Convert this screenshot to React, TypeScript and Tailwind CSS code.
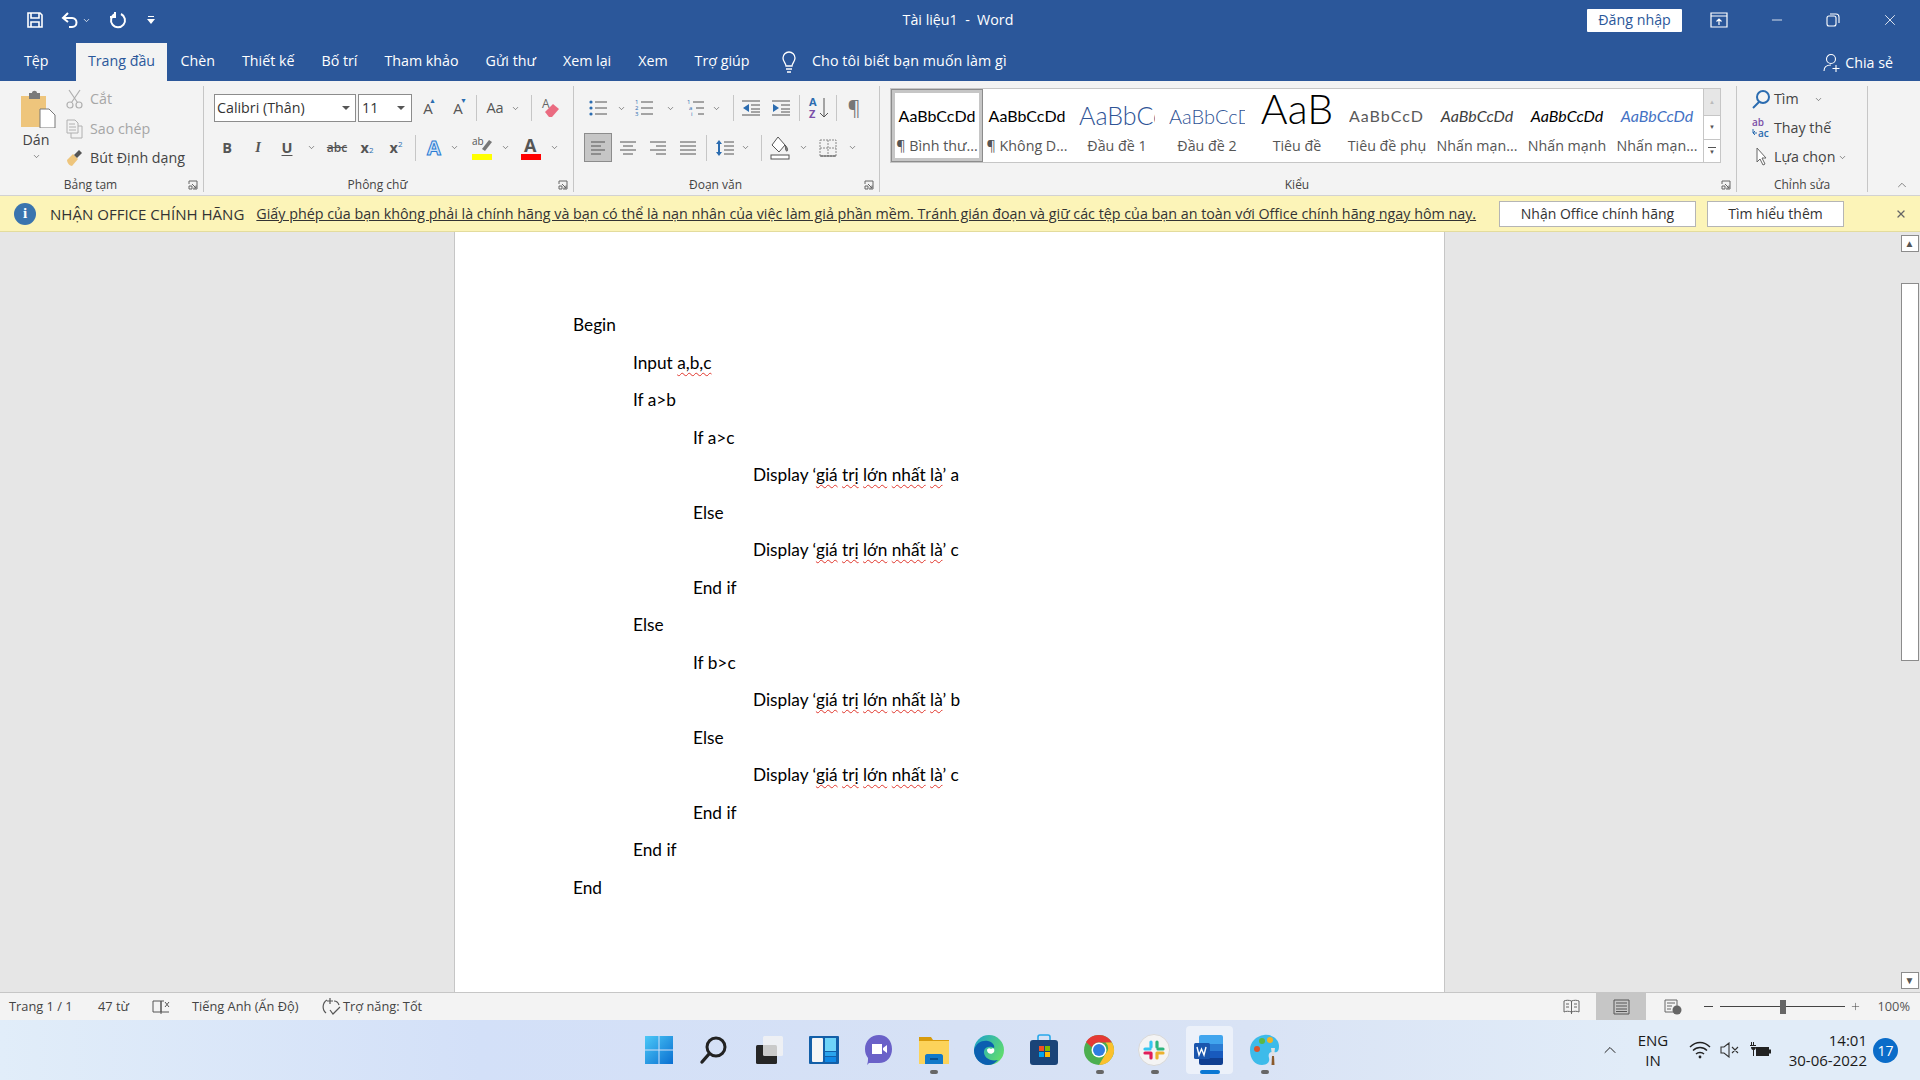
import type { ReactNode } from "react";
import { ChevronDown, ChevronUp, Minus, Plus, X } from "lucide-react";

const tabs = ["Chèn", "Thiết kế", "Bố trí", "Tham khảo", "Gửi thư", "Xem lại", "Xem", "Trợ giúp"];

const indents = ["pl-0", "pl-[60px]", "pl-[120px]", "pl-[180px]"];

const Bad = ({ children }: { children: ReactNode }) => (
  <span className="underline decoration-wavy decoration-[#e0362c] decoration-1 underline-offset-[3px]">{children}</span>
);

const Display = ({ end }: { end: string }) => (
  <>
    Display ‘<Bad>giá</Bad> <Bad>trị</Bad> <Bad>lớn</Bad> <Bad>nhất</Bad> <Bad>là</Bad>’ {end}
  </>
);

const lines: { level: number; text: ReactNode }[] = [
  { level: 0, text: "Begin" },
  { level: 1, text: <>Input <Bad>a,b,c</Bad></> },
  { level: 1, text: "If a>b" },
  { level: 2, text: "If a>c" },
  { level: 3, text: <Display end="a" /> },
  { level: 2, text: "Else" },
  { level: 3, text: <Display end="c" /> },
  { level: 2, text: "End if" },
  { level: 1, text: "Else" },
  { level: 2, text: "If b>c" },
  { level: 3, text: <Display end="b" /> },
  { level: 2, text: "Else" },
  { level: 3, text: <Display end="c" /> },
  { level: 2, text: "End if" },
  { level: 1, text: "End if" },
  { level: 0, text: "End" },
];

function Ico({ w = 20, h = 20, children }: { w?: number; h?: number; children: ReactNode }) {
  return (
    <svg width={w} height={h} viewBox={`0 0 ${w} ${h}`} fill="none" stroke="#555" strokeWidth="1" className="shrink-0 overflow-visible">
      {children}
    </svg>
  );
}

const Chev = ({ className = "" }: { className?: string }) => (
  <div className={`w-[10px] flex justify-center shrink-0 ${className}`}>
    <ChevronDown size={9} strokeWidth={1.6} color="#444" />
  </div>
);

const Cell = ({ className = "", children }: { className?: string; children: ReactNode }) => (
  <div className={`w-[20px] h-full flex items-center justify-center shrink-0 ${className}`}>{children}</div>
);

const Div = ({ className = "" }: { className?: string }) => (
  <div className={`w-px h-[26px] bg-[#c6c6c6] shrink-0 ${className}`} />
);

const Launcher = () => (
  <svg width="10" height="10" viewBox="0 0 10 10" fill="none" stroke="#666" strokeWidth="1" className="absolute right-[5px] bottom-[2px]">
    <path d="M1 4V1h8v8H5M4 4l4 4M5.500 8H8V5.500" />
    <path d="M1 6h3v3H1z" />
  </svg>
);

function Group({ label, launcher, className, children }: { label: string; launcher?: boolean; className: string; children: ReactNode }) {
  return (
    <div className={`relative h-[106px] flex flex-col border-r border-[#c6c6c6] shrink-0 ${className}`}>
      <div className="flex-1 min-h-0">{children}</div>
      <div className={`h-[14px] leading-[14px] text-center text-[12px] text-[#444] ${launcher ? "pr-[22px]" : ""}`}>{label}</div>
      {launcher && <Launcher />}
    </div>
  );
}

const ListIcon = ({ kind }: { kind: "b" | "n" | "m" }) => (
  <Ico>
    {kind === "b" && (
      <g fill="#2b6cb0" stroke="none">
        <circle cx="3" cy="4" r="1.600" />
        <circle cx="3" cy="10" r="1.600" />
        <circle cx="3" cy="16" r="1.600" />
      </g>
    )}
    {kind !== "b" && (
      <g fill="#2b6cb0" stroke="none" fontSize="6" fontFamily="Open Sans">
        <text x="1" y="6">1</text>
        <text x={kind === "m" ? 3 : 1} y="12">{kind === "m" ? "a" : "2"}</text>
        <text x={kind === "m" ? 5 : 1} y="18">{kind === "m" ? "i" : "3"}</text>
      </g>
    )}
    <path d={kind === "m" ? "M7 4h11M10 10h8M12 16h6" : "M7 4h12M7 10h12M7 16h12"} />
  </Ico>
);

const AlignIcon = ({ d }: { d: string }) => (
  <Ico>
    <path d={d} stroke="#555" />
  </Ico>
);

function StyleItem({ preview, label, selected, className = "" }: { preview: ReactNode; label: string; selected?: boolean; className?: string }) {
  return (
    <div className={`w-[90px] h-[71px] shrink-0 overflow-hidden flex flex-col ${selected ? "border-[3px] border-[#c6c6c6] outline outline-1 outline-[#8c8c8c]" : ""}`}>
      <div className={`${selected ? "h-[43px] pt-[2px]" : "h-[46px] pt-[5px]"} flex items-center justify-center overflow-hidden whitespace-nowrap font-['Lato',sans-serif] ${className}`}>
        {preview}
      </div>
      <div className="h-[20px] leading-[20px] text-center text-[#555] text-[14.250px] whitespace-nowrap">{label}</div>
    </div>
  );
}

function Logo({ children }: { children: ReactNode }) {
  return (
    <svg width="32" height="32" viewBox="0 0 32 32">
      {children}
    </svg>
  );
}

const dockIcons: { icon: ReactNode; run?: boolean; active?: boolean }[] = [
  {
    icon: (
      <Logo>
        <defs>
          <linearGradient id="win" x1="0" y1="0" x2="1" y2="1">
            <stop offset="0" stopColor="#4cc8f7" />
            <stop offset="1" stopColor="#0a6fd1" />
          </linearGradient>
        </defs>
        <path d="M2 2h13.500v13.500H2zM16.500 2H30v13.500H16.500zM2 16.500h13.500V30H2zM16.500 16.500H30V30H16.500z" fill="url(#win)" />
      </Logo>
    ),
  },
  {
    icon: (
      <Logo>
        <circle cx="18" cy="13" r="9" fill="none" stroke="#222" strokeWidth="3" />
        <path d="M11 20l-7 8" stroke="#222" strokeWidth="3.400" strokeLinecap="round" />
      </Logo>
    ),
  },
  {
    icon: (
      <Logo>
        <rect x="3" y="11" width="21" height="19" rx="1.500" fill="#262626" />
        <rect x="10" y="2" width="20" height="20" rx="1.500" fill="#f4f4f4" fillOpacity="0.8" />
      </Logo>
    ),
  },
  {
    icon: (
      <Logo>
        <rect x="1" y="2" width="30" height="28" rx="1" fill="#135fa8" />
        <rect x="4" y="4" width="11" height="24" rx="1" fill="#f5f5f5" />
        <rect x="17" y="4" width="11" height="13" fill="#6fd4f8" />
        <rect x="17" y="18" width="11" height="4" fill="#2ba4ec" />
        <rect x="17" y="23" width="11" height="5" fill="#1088e4" />
      </Logo>
    ),
  },
  {
    icon: (
      <Logo>
        <path d="M16 1c8 0 13 6 13 14s-5 14-13 14H6l-2 2c1-3 1-5 1-7-2-3-3-5-3-9C2 7 8 1 16 1z" fill="#6a61c8" />
        <path d="M9 10h10v10H9zM20 14l4-3v8l-4-3z" fill="#fff" />
      </Logo>
    ),
  },
  {
    run: true,
    icon: (
      <Logo>
        <path d="M1 3h12l2 3h16v3H1z" fill="#d89b0c" />
        <path d="M1 7h30v23H1z" fill="#fcd35a" />
        <path d="M7 22c0-1 1-2 2-2h14c1 0 2 1 2 2v8H7z" fill="#1279c9" />
        <path d="M12 25h8" stroke="#063f78" strokeWidth="1.400" />
      </Logo>
    ),
  },
  {
    icon: (
      <Logo>
        <defs>
          <linearGradient id="edgeA" x1="0" y1="0" x2="1" y2="0.6">
            <stop offset="0" stopColor="#1aa0cf" />
            <stop offset="1" stopColor="#5fdc6e" />
          </linearGradient>
        </defs>
        <circle cx="16" cy="16" r="15" fill="url(#edgeA)" />
        <path d="M1 16C3 9 9 6 15 7c5 1 7 5 6 7-3-2-9-2-10 3-1 6 6 11 14 9-3 3-6 5-10 5C7 31 1 24 1 16z" fill="#0b5fb0" />
        <path d="M18 15c3-2 4 1 3 3-2 3-7 2-7-2 0-1 2-3 4-1z" fill="#fff" />
      </Logo>
    ),
  },
  {
    icon: (
      <Logo>
        <path d="M10 7V3c0-1 1-2 2-2h8c1 0 2 1 2 2v4" fill="none" stroke="#28a8ea" strokeWidth="1.600" />
        <rect x="2" y="6" width="28" height="25" rx="3" fill="#1a4478" />
        <rect x="11" y="12" width="5" height="5" fill="#f25022" />
        <rect x="17" y="12" width="5" height="5" fill="#7fba00" />
        <rect x="11" y="18" width="5" height="5" fill="#00a4ef" />
        <rect x="17" y="18" width="5" height="5" fill="#ffb900" />
      </Logo>
    ),
  },
  {
    run: true,
    icon: (
      <Logo>
        <circle cx="16" cy="16" r="15" fill="#4caf50" />
        <path d="M16 1a15 15 0 0 1 13 7.500H16a7.500 7.500 0 0 0-7 5L3 8A15 15 0 0 1 16 1z" fill="#e53935" />
        <path d="M29 8.500A15 15 0 0 1 16 31l6.500-11a7.500 7.500 0 0 0 0-11.500z" fill="#fbc02d" />
        <circle cx="16" cy="16" r="7.500" fill="#fff" />
        <circle cx="16" cy="16" r="6" fill="#2f7de1" />
      </Logo>
    ),
  },
  {
    run: true,
    icon: (
      <Logo>
        <circle cx="16" cy="16" r="15.500" fill="#f4f4f4" stroke="#d8d8d8" />
        <g strokeWidth="3.200" strokeLinecap="round">
          <path d="M13 8v5" stroke="#36c5f0" />
          <path d="M7 15h5" stroke="#36c5f0" />
          <path d="M19 8v5" stroke="#2eb67d" />
          <path d="M20 15h5" stroke="#2eb67d" />
          <path d="M19 24v-5" stroke="#ecb22e" />
          <path d="M25 19h-5" stroke="#ecb22e" />
          <path d="M13 24v-5" stroke="#e01e5a" />
          <path d="M7 19h5" stroke="#e01e5a" />
        </g>
      </Logo>
    ),
  },
  {
    active: true,
    icon: (
      <Logo>
        <path d="M8 1h20a2 2 0 0 1 2 2v7H6V3a2 2 0 0 1 2-2z" fill="#41a5ee" />
        <path d="M6 10h24v7H6z" fill="#2b7cd3" />
        <path d="M6 17h24v7H6z" fill="#185abd" />
        <path d="M6 24h24v5a2 2 0 0 1-2 2H8a2 2 0 0 1-2-2z" fill="#103f91" />
        <rect x="1" y="9" width="16" height="16" rx="1.500" fill="#1a55ad" />
        <path d="M4 13l2 8 2.500-6 2.500 6 2-8" fill="none" stroke="#fff" strokeWidth="1.400" />
      </Logo>
    ),
  },
  {
    run: true,
    icon: (
      <Logo>
        <path d="M15 1c8-1 15 4 15 11 0 8-4 6-7 6-3 0-4 3-3 6s-1 7-7 7C6 31 1 25 1 16 1 8 7 2 15 1z" fill="#3dbbea" />
        <circle cx="8" cy="15" r="3" fill="#d9552d" />
        <circle cx="13" cy="7" r="3" fill="#5bb846" />
        <circle cx="21" cy="6" r="3" fill="#f3b325" />
        <path d="M22 14h4l-1 8h-2z" fill="#e0e0e0" />
        <path d="M23 22h2l.5 9h-3z" fill="#8a5a2b" />
      </Logo>
    ),
  },
];

export default function App() {
  return (
    <div className="w-[1920px] h-[1080px] overflow-hidden flex flex-col font-['Open_Sans',sans-serif] text-[14px] bg-[#e6e6e6]">
      {/* Title bar */}
      <div className="h-[43px] bg-[#2b579a] flex items-center text-white shrink-0 pb-[3px]">
        <div className="w-[70px] flex justify-center">
          <svg width="18" height="18" viewBox="0 0 18 18" fill="none" stroke="#fff" strokeWidth="1.600">
            <path d="M2 2h12l2 2v12H2z" />
            <path d="M5 2v5h8V2M5 16v-5h8v5" />
          </svg>
        </div>
        <svg width="20" height="18" viewBox="0 0 20 18" fill="none" stroke="#fff" strokeWidth="2" className="-ml-[10px]">
          <path d="M8 2L3 7l5 4M3 7h9c6 0 6 9 0 9H9" />
        </svg>
        <ChevronDown size={9} color="#fff" className="ml-[2px]" />
        <svg width="18" height="18" viewBox="0 0 18 18" fill="none" stroke="#fff" strokeWidth="2" className="ml-[18px]">
          <path d="M6 3a7 7 0 1 0 6 0M6 1v5H1" />
        </svg>
        <svg width="8" height="8" viewBox="0 0 8 8" fill="#fff" className="ml-[20px]">
          <path d="M1 0h6v1H1zM0 3h8L4 8z" />
        </svg>
        <div className="ml-[743px] w-[120px] text-center whitespace-pre text-[14.250px]">Tài liệu1  -  Word</div>
        <div className="ml-[569px] w-[95px] h-[23px] bg-white text-[#2b579a] text-[14.250px] flex items-center justify-center rounded-[1px]">Đăng nhập</div>
        <svg width="18" height="16" viewBox="0 0 18 16" fill="none" stroke="#fff" strokeWidth="1.200" className="ml-[28px]">
          <path d="M1 1h16v14H1zM1 4h16M9 13V7M6.500 9.500L9 7l2.500 2.500" />
        </svg>
        <Minus size={16} color="#fff" strokeWidth={1.2} className="ml-[41px]" />
        <svg width="14" height="14" viewBox="0 0 14 14" fill="none" stroke="#fff" strokeWidth="1.100" className="ml-[41px]">
          <rect x="1" y="3" width="9" height="10" rx="2" />
          <path d="M4 1h6c2 0 3 1 3 3v6" />
        </svg>
        <X size={18} color="#fff" strokeWidth={1.1} className="ml-[41px]" />
      </div>

      {/* Tabs */}
      <div className="h-[38px] bg-[#2b579a] flex items-end text-white shrink-0 text-[14.250px]">
        <div className="h-full ml-[24px] w-[52px] flex items-center pb-[2px]">Tệp</div>
        <div className="h-full w-[91px] bg-[#f3f3f3] text-[#2b579a] flex items-center justify-center pb-[2px]">Trang đầu</div>
        {tabs.map((t) => (
          <div key={t} className="h-full px-[13.500px] flex items-center whitespace-nowrap pb-[2px]">{t}</div>
        ))}
        <svg width="18" height="22" viewBox="0 0 18 22" fill="none" stroke="#fff" strokeWidth="1.300" className="ml-[17px] mb-[8px]">
          <path d="M6 15c0-3-3-4-3-8a6 6 0 0 1 12 0c0 4-3 5-3 8zM6 18h6M7 21h4" />
        </svg>
        <div className="ml-[14px] h-full flex items-center whitespace-nowrap tracking-[0.100px] pb-[2px]">Cho tôi biết bạn muốn làm gì</div>
        <div className="ml-auto pr-[27px] h-full flex items-center gap-[4px] pt-[2px]">
          <svg width="18" height="20" viewBox="0 0 18 20" fill="none" stroke="#fff" strokeWidth="1.100">
            <circle cx="8" cy="6" r="4.500" />
            <path d="M1 18c0-4 3-6 7-6M13 12v7M9.500 15.500h7" />
          </svg>
          Chia sẻ
        </div>
      </div>

      {/* Ribbon */}
      <div className="h-[115px] bg-[#f3f3f3] border-b border-[#d2d2d2] flex pt-[5px] shrink-0 text-[#444] text-[14.250px]">
        <Group label="Bảng tạm" launcher className="w-[204px]">
          <div className="flex h-full">
            <div className="w-[66px] pl-[6px] flex flex-col items-center pt-[4px] shrink-0">
              <svg width="36" height="38" viewBox="0 0 36 38" className="ml-[4px]">
                <path d="M1 6h25v31H1z" fill="#eec57c" />
                <path d="M9 3h3c0-3 5-3 5 0h3v6H9z" fill="#7a7a7a" />
                <path d="M20 19h9l6 6v13H20z" fill="#fff" stroke="#777" />
              </svg>
              <div className="mt-[3px] leading-[18px]">Dán</div>
              <ChevronDown size={9} strokeWidth={1.6} color="#444" className="mt-[3px]" />
            </div>
            <div className="flex flex-col gap-[5.500px] pt-[1px]">
              <div className="h-[24px] flex items-center gap-[7px] text-[#a6a6a6]">
                <svg width="17" height="20" viewBox="0 0 17 20" fill="none" stroke="#b0b0b0" strokeWidth="1.200">
                  <circle cx="4" cy="16" r="3" />
                  <circle cx="13" cy="16" r="3" />
                  <path d="M5.500 13.500L14 1M11.500 13.500L3 1" />
                </svg>
                Cắt
              </div>
              <div className="h-[24px] flex items-center gap-[7px] text-[#a6a6a6]">
                <svg width="17" height="20" viewBox="0 0 17 20" fill="none" stroke="#b0b0b0" strokeWidth="1">
                  <path d="M1 1h8l3 3v10H1zM5 14v5h11V7h-4M3 5h6M3 8h7M3 11h7" />
                </svg>
                Sao chép
              </div>
              <div className="h-[24px] flex items-center gap-[7px]">
                <svg width="17" height="18" viewBox="0 0 17 18">
                  <path d="M1 11l6-6 5 5-6 7c-2 0-5-3-5-6z" fill="#eec57c" />
                  <path d="M8 6l5-5 3 3-5 5z" fill="#555" />
                </svg>
                Bút Định dạng
              </div>
            </div>
          </div>
        </Group>

        <Group label="Phông chữ" launcher className="w-[370px]">
          <div className="flex h-[28px] mt-[8px] items-center">
            <div className="ml-[10px] w-[142px] h-[28px] bg-white border border-[#8c8c8c] flex items-center px-[2px] text-[#333] text-[14.250px] shrink-0">
              <span className="flex-1">Calibri (Thân)</span>
              <svg width="8" height="4" viewBox="0 0 8 4" className="mr-[3px]"><path d="M0 0h8L4 4z" fill="#555" /></svg>
            </div>
            <div className="ml-[2px] w-[54px] h-[28px] bg-white border border-[#8c8c8c] flex items-center px-[3px] text-[#333] text-[14.250px] shrink-0">
              <span className="flex-1">11</span>
              <svg width="8" height="4" viewBox="0 0 8 4" className="mr-[3px]"><path d="M0 0h8L4 4z" fill="#555" /></svg>
            </div>
            <Cell className="ml-[6px] relative text-[#555] text-[15px]">A<span className="absolute right-[2px] top-[3px] text-[7px] leading-[8px] text-[#2b6cb0]">▲</span></Cell>
            <Cell className="ml-[10px] relative text-[#555] text-[15px]">A<span className="absolute right-[1px] top-[3px] text-[7px] leading-[8px] text-[#2b6cb0]">▼</span></Cell>
            <Div className="ml-[8px]" />
            <Cell className="ml-[8px] text-[#555] text-[14.500px]">Aa</Cell>
            <Chev className="ml-[5px]" />
            <Div className="ml-[11px]" />
            <Cell className="ml-[9px]">
              <svg width="20" height="22" viewBox="0 0 20 22" className="overflow-visible">
                <text x="1" y="11" fontSize="12" fill="#666" fontFamily="Open Sans">A</text>
                <path d="M4 15l8-8 6 5-7 8H8z" fill="#ea6b80" />
              </svg>
            </Cell>
          </div>
          <div className="flex h-[29px] mt-[11px] items-center text-[#555]">
            <Cell className="ml-[13px] font-bold text-[14.500px]">B</Cell>
            <Cell className="ml-[11px] italic font-semibold text-[14.500px] font-['Liberation_Serif',serif]">I</Cell>
            <Cell className="ml-[9px] font-bold text-[14.500px] underline underline-offset-2">U</Cell>
            <Chev className="ml-[9px]" />
            <Cell className="ml-[11px] line-through text-[12px] font-semibold">abc</Cell>
            <Cell className="ml-[10px] font-bold text-[14.500px]">x<sub className="text-[8px] text-[#2b6cb0] font-normal">2</sub></Cell>
            <Cell className="ml-[9px] font-bold text-[14.500px]">x<sup className="text-[8px] text-[#2b6cb0] font-normal">2</sup></Cell>
            <Div className="ml-[9px]" />
            <Cell className="ml-[8px]">
              <span className="text-[20px] leading-none font-bold text-[#cfe3f7] [-webkit-text-stroke:1px_#2b7cd3]">A</span>
            </Cell>
            <Chev className="ml-[5px]" />
            <Cell className="ml-[13px]">
              <svg width="20" height="24" viewBox="0 0 20 24" className="overflow-visible">
                <text x="0" y="9" fontSize="10" fill="#555" fontFamily="Open Sans">ab</text>
                <path d="M10 13l7-9 3 2-7 9z" fill="#777" />
                <rect x="0" y="18" width="20" height="6" fill="#ffff00" />
              </svg>
            </Cell>
            <Chev className="ml-[8px]" />
            <Cell className="ml-[11px]">
              <svg width="20" height="24" viewBox="0 0 20 24" className="overflow-visible">
                <text x="3" y="16" fontSize="18" fontWeight="700" fill="#555" fontFamily="Open Sans">A</text>
                <rect x="0" y="18" width="20" height="6" fill="#ff0000" />
              </svg>
            </Cell>
            <Chev className="ml-[8px]" />
          </div>
        </Group>

        <Group label="Đoạn văn" launcher className="w-[306px]">
          <div className="flex h-[28px] mt-[8px] items-center">
            <Cell className="ml-[14px]"><ListIcon kind="b" /></Cell>
            <Chev className="ml-[8px]" />
            <Cell className="ml-[8px]"><ListIcon kind="n" /></Cell>
            <Chev className="ml-[11px]" />
            <Cell className="ml-[11px]"><ListIcon kind="m" /></Cell>
            <Chev className="ml-[5px]" />
            <Div className="ml-[12px]" />
            <Cell className="ml-[7px]">
              <Ico><path d="M1 3h18M10 7h9M10 11h9M1 17h18M10 14h9" /><path d="M8 6v8L2 10z" fill="#2b6cb0" stroke="none" /></Ico>
            </Cell>
            <Cell className="ml-[10px]">
              <Ico><path d="M1 3h18M10 7h9M10 11h9M1 17h18M10 14h9" /><path d="M2 6v8l6-4z" fill="#2b6cb0" stroke="none" /></Ico>
            </Cell>
            <Div className="ml-[8px]" />
            <Cell className="ml-[9px]">
              <Ico h={24}>
                <text x="0" y="10" fontSize="11" fontWeight="700" fill="#2b6cb0" stroke="none" fontFamily="Open Sans">A</text>
                <text x="0" y="22" fontSize="11" fontWeight="700" fill="#7b4fa8" stroke="none" fontFamily="Open Sans">Z</text>
                <path d="M15 2v19M11 17l4 4 4-4" />
              </Ico>
            </Cell>
            <Div className="ml-[7px]" />
            <Cell className="ml-[7px] text-[#777] text-[20px]">¶</Cell>
          </div>
          <div className="flex h-[29px] mt-[11px] items-center">
            <Cell className="ml-[10px] w-[28px] bg-[#c6c6c6] border border-[#8c8c8c]"><AlignIcon d="M3 4h14M3 8h10M3 12h14M3 16h10" /></Cell>
            <Cell className="ml-[6px]"><AlignIcon d="M2 4h16M5 8h10M2 12h16M5 16h10" /></Cell>
            <Cell className="ml-[10px]"><AlignIcon d="M2 4h16M8 8h10M2 12h16M8 16h10" /></Cell>
            <Cell className="ml-[10px]"><AlignIcon d="M2 4h16M2 8h16M2 12h16M2 16h16" /></Cell>
            <Div className="ml-[8px]" />
            <Cell className="ml-[8px]">
              <Ico><path d="M9 4h10M9 8h10M9 12h10M9 16h10" /><path d="M4 2L1 6h6zM4 18L1 14h6z" fill="#2b6cb0" stroke="none" /><path d="M4 5v10" stroke="#2b6cb0" strokeWidth="2" /></Ico>
            </Cell>
            <Chev className="ml-[5px]" />
            <Div className="ml-[11px]" />
            <Cell className="ml-[8px]">
              <Ico h={24}><path d="M8 1l7 8-6 7-7-7z" fill="#fff" /><path d="M15 9c3 3 3 6 2 6-2 0-1-3-2-6z" fill="#888" /><rect x="1" y="19" width="18" height="4" fill="#fff" /></Ico>
            </Cell>
            <Chev className="ml-[8px]" />
            <Cell className="ml-[10px]">
              <Ico><rect x="2" y="2" width="16" height="16" strokeDasharray="2 1" stroke="#888" /><path d="M10 2v16M2 10h16" strokeDasharray="2 1" stroke="#888" /><path d="M2 18h16" stroke="#555" /></Ico>
            </Cell>
            <Chev className="ml-[9px]" />
          </div>
        </Group>

        <Group label="Kiểu" launcher className="w-[857px]">
          <div className="ml-[10px] mt-[2px] w-[831px] h-[75px] bg-white border border-[#c6c6c6] flex">
            <div className="flex-1 flex pl-[1px] pt-[1px] h-[72px]">
              <StyleItem selected label="¶ Bình thư..." preview={<span className="text-[16px] text-black">AaBbCcDd</span>} />
              <StyleItem label="¶ Không D..." preview={<span className="text-[16px] text-black">AaBbCcDd</span>} />
              <StyleItem label="Đầu đề 1" preview={<span className="block w-[76px] overflow-hidden text-[25px] font-light text-[#2f5496]">AaBbCc</span>} />
              <StyleItem label="Đầu đề 2" preview={<span className="block w-[76px] overflow-hidden text-[20px] font-light text-[#2f5496]">AaBbCcD</span>} />
              <StyleItem label="Tiêu đề" preview={<span className="text-[41px] leading-[41px] mb-[14px] font-light text-black">AaB</span>} />
              <StyleItem label="Tiêu đề phụ" preview={<span className="block w-[76px] overflow-hidden text-[16px] tracking-[1px] text-[#5a5a5a]">AaBbCcD</span>} />
              <StyleItem label="Nhấn mạn..." preview={<span className="text-[16px] italic text-[#404040]">AaBbCcDd</span>} />
              <StyleItem label="Nhấn mạnh" preview={<span className="text-[16px] italic text-black">AaBbCcDd</span>} />
              <StyleItem label="Nhấn mạn..." preview={<span className="text-[16px] italic text-[#4472c4]">AaBbCcDd</span>} />
            </div>
            <div className="w-[17px] flex flex-col border-l border-[#c6c6c6] shrink-0">
              <div className="h-[26px] bg-[#e6e6e6] flex items-center justify-center text-[#bbb] text-[6px]">▲</div>
              <div className="h-[25px] border-y border-[#c6c6c6] flex items-center justify-center text-[#555] text-[6px]">▼</div>
              <div className="flex-1 flex flex-col items-center justify-center gap-[1px]">
                <div className="w-[8px] h-px bg-[#555]" />
                <div className="text-[#555] text-[6px] leading-[7px]">▼</div>
              </div>
            </div>
          </div>
        </Group>

        <Group label="Chỉnh sửa" className="w-[131px]">
          <div className="flex flex-col gap-[5px] pl-[14px] pt-[1px]">
            <div className="h-[24px] flex items-center gap-[3px]">
              <svg width="20" height="20" viewBox="0 0 20 20" fill="none" stroke="#2b6cb0" strokeWidth="2">
                <circle cx="12" cy="8" r="6" />
                <path d="M8 13l-6 6" />
              </svg>
              Tìm
              <Chev className="ml-[12px]" />
            </div>
            <div className="h-[24px] flex items-center gap-[3px]">
              <svg width="20" height="22" viewBox="0 0 20 22" className="overflow-visible">
                <text x="1" y="9" fontSize="10" fontWeight="600" fill="#7b4fa8" fontFamily="Open Sans">ab</text>
                <text x="7" y="20" fontSize="10" fontWeight="600" fill="#2b6cb0" fontFamily="Open Sans">ac</text>
                <path d="M2 12v4h4M4 14l-2 2 2 2" fill="none" stroke="#2b6cb0" />
              </svg>
              Thay thế
            </div>
            <div className="h-[24px] flex items-center gap-[3px]">
              <svg width="20" height="20" viewBox="0 0 20 20" fill="#fff" stroke="#666">
                <path d="M6 1v14l3-3 3 6 2-1-3-6h4z" />
              </svg>
              Lựa chọn
              <Chev className="-ml-[1px]" />
            </div>
          </div>
        </Group>

        <div className="flex-1 h-[106px] flex items-end justify-end pr-[11px]">
          <ChevronUp size={14} strokeWidth={1.2} color="#555" />
        </div>
      </div>

      {/* Activation banner */}
      <div className="h-[36px] bg-[#fcf4b8] border-b border-[#e3dc9d] flex items-center shrink-0 text-[#333] text-[14px]">
        <div className="ml-[14px] w-[22px] h-[22px] rounded-full bg-[#3a74ae] text-white flex items-center justify-center font-bold text-[15px] font-['Liberation_Serif',serif]">i</div>
        <div className="ml-[14px] pt-[1px] whitespace-nowrap text-[15.050px]">NHẬN OFFICE CHÍNH HÃNG</div>
        <div className="ml-[12px] pt-[1px] underline whitespace-nowrap text-[14.300px]">Giấy phép của bạn không phải là chính hãng và bạn có thể là nạn nhân của việc làm giả phần mềm. Tránh gián đoạn và giữ các tệp của bạn an toàn với Office chính hãng ngay hôm nay.</div>
        <div className="ml-auto w-[197px] h-[26px] bg-white border border-[#b5b5b5] flex items-center justify-center">Nhận Office chính hãng</div>
        <div className="ml-[11px] w-[137px] h-[26px] bg-white border border-[#b5b5b5] flex items-center justify-center">Tìm hiểu thêm</div>
        <X size={12} strokeWidth={2.5} color="#666" className="ml-[51px] mr-[13px]" />
      </div>

      {/* Document area */}
      <div className="flex-1 min-h-0 flex bg-[#e6e6e6]">
        <div className="flex-1 flex justify-center">
          <div className="w-[991px] h-full bg-white border-x border-[#c6c6c6] pl-[118px] pt-[74px] font-['Lato',sans-serif] text-[17.250px] text-black">
            {lines.map((l, i) => (
              <div key={i} className={`h-[37.530px] leading-[37px] whitespace-nowrap ${indents[l.level]}`}>
                {l.text}
              </div>
            ))}
          </div>
        </div>
        <div className="w-[21px] shrink-0 flex flex-col items-center pt-[3px] pb-[3px]">
          <div className="w-[18px] h-[17px] bg-white border border-[#8c8c8c] flex items-center justify-center text-[#555] text-[10px]">▲</div>
          <div className="mt-[31px] w-[18px] h-[378px] bg-white border border-[#8c8c8c]" />
          <div className="flex-1" />
          <div className="w-[18px] h-[17px] bg-white border border-[#8c8c8c] flex items-center justify-center text-[#555] text-[10px]">▼</div>
        </div>
      </div>

      {/* Status bar */}
      <div className="h-[28px] bg-[#f3f3f3] border-t border-[#c6c6c6] flex items-center shrink-0 text-[#444] text-[12.800px]">
        <span className="ml-[9px] w-[89px] whitespace-nowrap pt-[1px]">Trang 1 / 1</span>
        <span className="w-[54px] whitespace-nowrap pt-[1px]">47 từ</span>
        <svg width="18" height="16" viewBox="0 0 18 16" fill="none" stroke="#555" className="shrink-0">
          <path d="M9 2H1v11h8zM9 2h3M9 13h8M9 2v13M13 3l4 5M17 3l-4 5" />
        </svg>
        <span className="ml-[22px] w-[130px] whitespace-nowrap pt-[1px]">Tiếng Anh (Ấn Độ)</span>
        <svg width="20" height="20" viewBox="0 0 20 20" fill="none" stroke="#555" strokeWidth="1.200" className="shrink-0">
          <path d="M5 3a8 8 0 0 0-1 13M8 1v6M5 4h6M12 4c2 0 4 1 5 4M8 13l3 4 7-7" />
        </svg>
        <span className="ml-[1px] whitespace-nowrap pt-[1px]">Trợ năng: Tốt</span>
        <svg width="17" height="16" viewBox="0 0 17 16" fill="none" stroke="#666" className="ml-auto shrink-0">
          <path d="M8.500 2C6 1 3 1 1 2v11c2-1 5-1 7.500 0 2.500-1 5.500-1 7.500 0V2c-2-1-5-1-7.500 0zM8.500 2v13M3 5h3M3 8h3M11 5h3M11 8h3" />
        </svg>
        <div className="ml-[16px] w-[50px] h-full bg-[#c6c6c6] flex items-center justify-center shrink-0">
          <svg width="17" height="16" viewBox="0 0 17 16" fill="none" stroke="#555">
            <path d="M1 1h15v14H1zM3 4h11M3 7h11M3 10h11M3 12.500h11" />
          </svg>
        </div>
        <svg width="18" height="16" viewBox="0 0 18 16" className="ml-[18px] shrink-0" fill="none" stroke="#666">
          <path d="M1 1h12v12H1zM3 4h8M3 7h5M3 10h4" />
          <circle cx="13" cy="11" r="4.500" fill="#666" stroke="none" />
        </svg>
        <div className="ml-[22px] w-[9px] h-px bg-[#444] shrink-0" />
        <div className="ml-[7px] w-[125px] h-px bg-[#444] shrink-0 flex items-center pl-[60px]">
          <div className="w-[6px] h-[14px] bg-[#666]" />
        </div>
        <Plus size={11} strokeWidth={1.2} color="#444" className="ml-[5px] shrink-0" />
        <span className="ml-[16px] mr-[10px] text-[#555] pt-[1px]">100%</span>
      </div>

      {/* Taskbar */}
      <div className="h-[60px] flex items-center shrink-0 bg-[linear-gradient(90deg,#e1edf9_0%,#d3e0f8_25%,#d6e1f5_50%,#d9e3f5_65%,#e1ecf8_85%,#e1ecf8_100%)] text-[#1a1a1a] text-[15px]">
        <div className="ml-[631px] flex shrink-0">
          {dockIcons.map((d, i) => (
            <div key={i} className="relative w-[55.100px] h-[48px] flex items-center justify-center">
              {d.active && <div className="absolute left-[4px] right-[4px] inset-y-0 bg-white/50 rounded-[4px]" />}
              <div className="relative">{d.icon}</div>
              {d.run && <div className="absolute bottom-[0px] left-[24px] w-[8px] h-[4px] rounded-full bg-[#666]" />}
              {d.active && <div className="absolute bottom-[0px] left-[18px] w-[20px] h-[4px] rounded-full bg-[#0a78d4]" />}
            </div>
          ))}
        </div>
        <div className="flex-1" />
        <div className="w-[20px] flex justify-center"><ChevronUp size={24} strokeWidth={1.2} color="#222" /></div>
        <div className="ml-[13px] w-[40px] text-center leading-[20px]">ENG<br />IN</div>
        <svg width="22" height="18" viewBox="0 0 22 18" fill="none" stroke="#222" strokeWidth="1.400" className="ml-[16px]">
          <path d="M1 6c6-6 14-6 20 0M4 9.500c4-4 10-4 14 0M7 13c2-2 6-2 8 0" />
          <circle cx="11" cy="16" r="1.400" fill="#222" stroke="none" />
        </svg>
        <svg width="20" height="16" viewBox="0 0 20 16" fill="none" stroke="#333" strokeWidth="1.100" className="ml-[9px]">
          <path d="M1 5h3l5-4v14l-5-4H1zM12 5l6 6M18 5l-6 6" />
        </svg>
        <svg width="22" height="18" viewBox="0 0 22 18" fill="#222" className="ml-[9px]">
          <path d="M1 4v1h6V4H5V1H4v3H3V1H2v3zM2 6c0 2 1 3 2 3v6h1V9c1 0 2-1 2-3zM7 6h13v9H7z" />
          <path d="M20 8.500h2v4h-2z" />
        </svg>
        <div className="ml-[11px] w-[85px] text-right leading-[20px] whitespace-nowrap">14:01<br />30-06-2022</div>
        <div className="ml-[6px] mr-[22px] w-[25px] h-[25px] rounded-full bg-[#0a6cc9] text-white flex items-center justify-center text-[14px]">17</div>
      </div>
    </div>
  );
}
